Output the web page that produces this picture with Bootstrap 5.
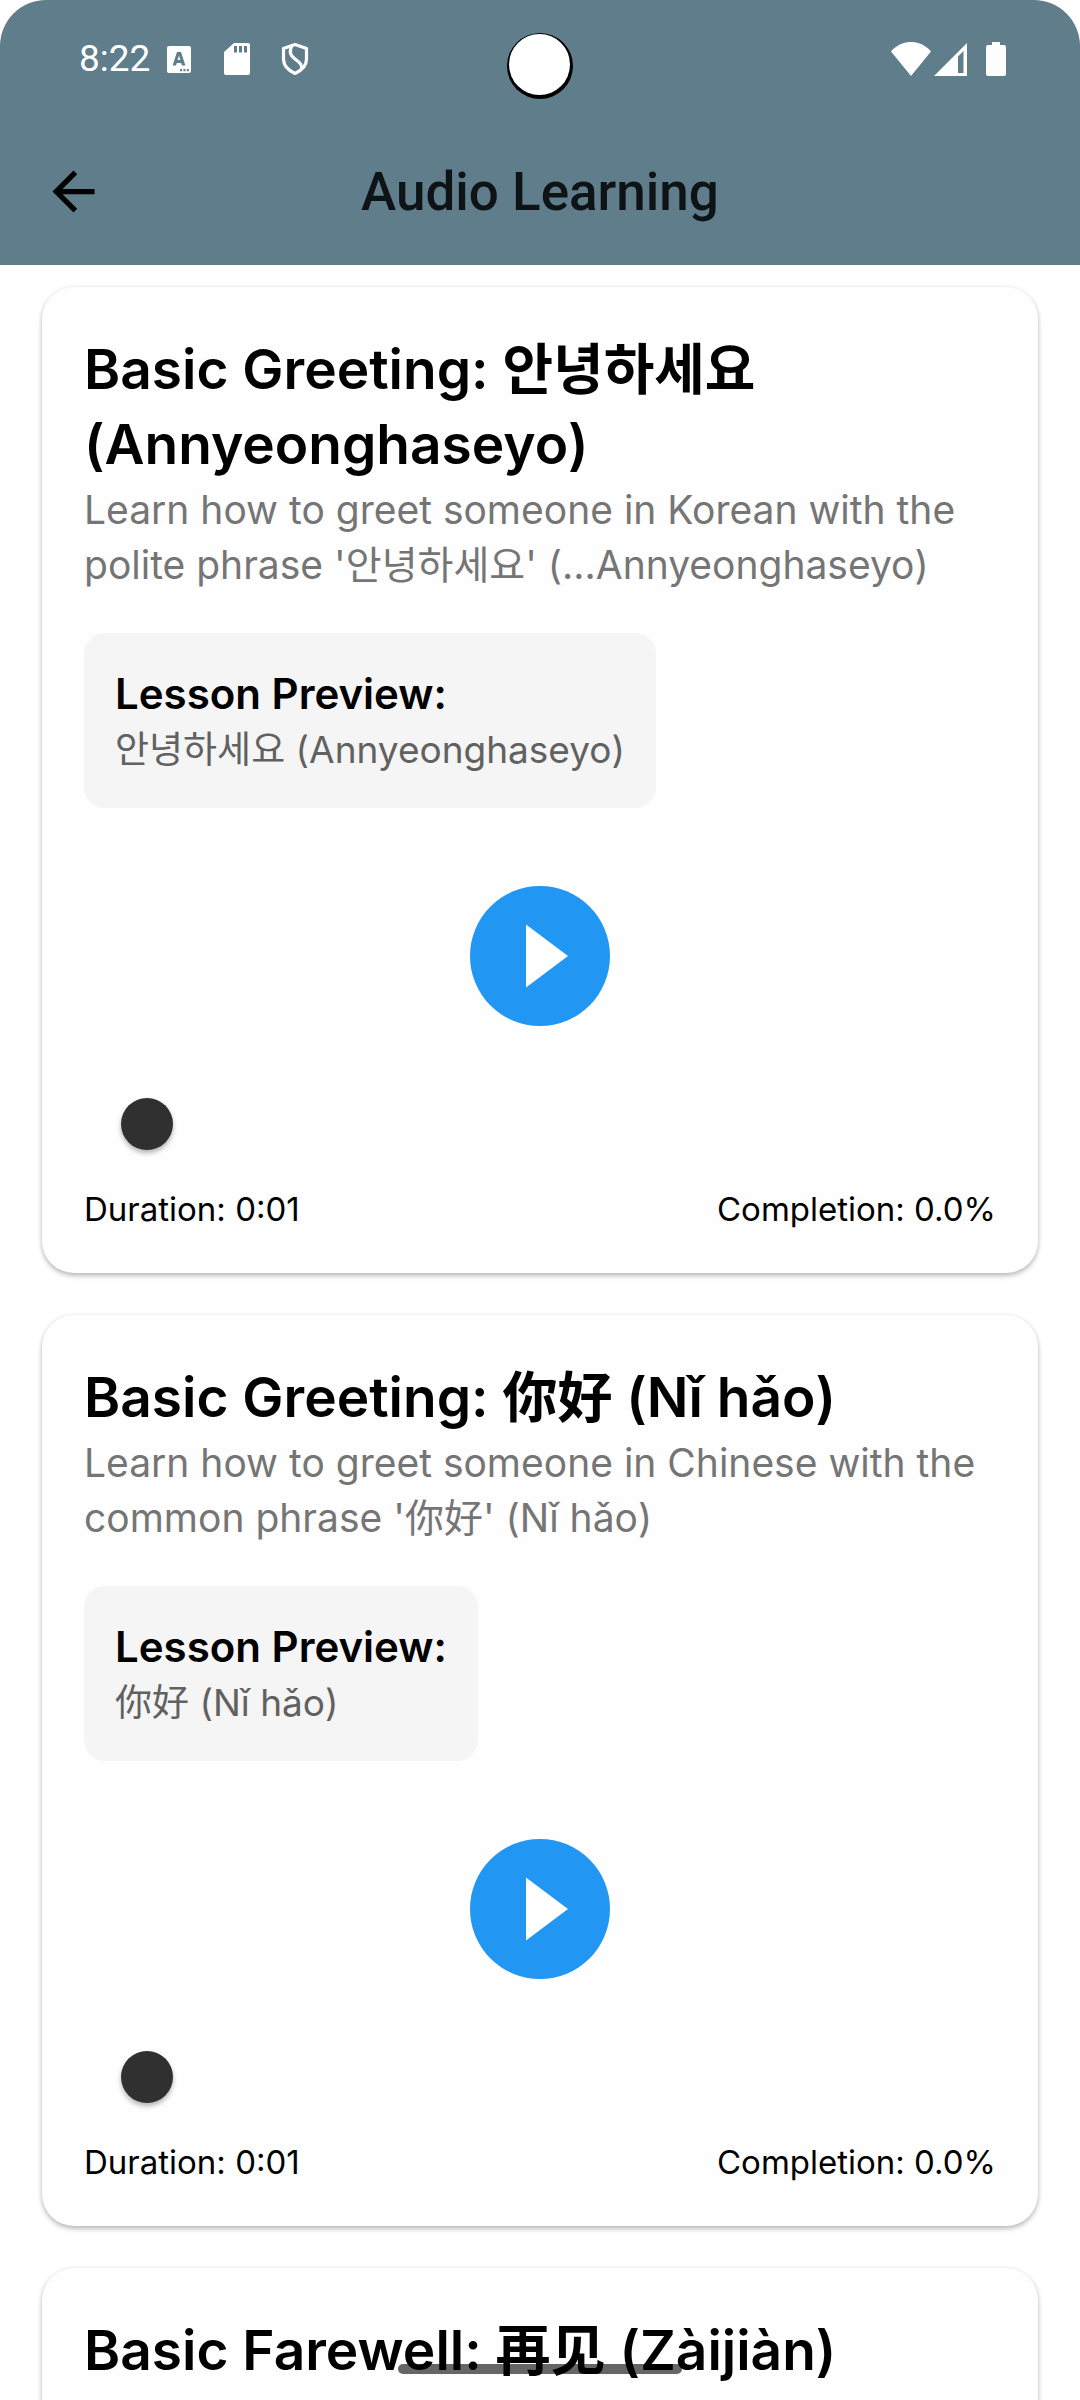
<!DOCTYPE html>
<html lang="en">
<head>
<meta charset="utf-8">
<meta name="viewport" content="width=device-width, initial-scale=1">
<title>Audio Learning</title>
<link href="https://cdn.jsdelivr.net/npm/bootstrap@5.3.0/dist/css/bootstrap.min.css" rel="stylesheet">
<style>
  body { background: #fff; color: #000; font-family: Inter, "Noto Sans CJK KR", sans-serif; }
  [lang="zh"] { font-family: Inter, "Noto Sans CJK SC", sans-serif; }
  .app-head { background: #607d8b; border-radius: 46px 46px 0 0; font-family: Roboto, sans-serif; }
  .status-bar { height: 118px; padding: 0 74px 0 79px; color: #fff; }
  .status-time { font-size: 37px; line-height: 44px; }
  .status-bar svg { display: block; fill: currentColor; }
  .icon-keys { margin-left: 17px; }
  .icon-card { margin-left: 33px; }
  .icon-shield { margin-left: 31px; }
  .icon-signal { margin-left: 3px; }
  .icon-battery { margin-left: 19px; }
  .camera { top: 33px; width: 66px; height: 66px; }
  .app-bar { height: 147px; padding: 0 42px; }
  .back-btn, .bar-end { width: 63px; height: 63px; }
  .app-title { font-size: 53px; line-height: 62px; font-weight: 500; color: #0e1316; }
  .lessons { padding: 22px 42px 0; gap: 42px; }
  .lesson { border: 0; border-radius: 32px; background: #fefefe; padding: 45px 42px 42px; flex-shrink: 0;
    box-shadow: 0 3px 5px rgba(0,0,0,.24), 0 0 5px rgba(0,0,0,.08); }
  .lesson-title { font-size: 55px; line-height: 75px; font-weight: 600; margin: 0; }
  .lesson-text { font-size: 39px; line-height: 55px; color: #757575; margin: 0 0 41px; }
  .preview { background: #f5f5f5; border-radius: 21px; padding: 31px; margin-bottom: 78px; }
  .preview-title { font-size: 42px; line-height: 59px; font-weight: 600; margin: 0; }
  .preview-text { font-size: 37px; line-height: 54px; color: #616161; margin: 0; }
  .play { width: 140px; height: 140px; background: #2196f3; }
  .seek { height: 127px; margin-top: 34px; padding: 0 37px; appearance: none; -webkit-appearance: none; background: transparent; }
  .seek::-webkit-slider-runnable-track { height: 52px; background: transparent; }
  .seek::-webkit-slider-thumb { -webkit-appearance: none; width: 52px; height: 52px; border-radius: 50%;
    background: #303030; box-shadow: 0 3px 5px rgba(0,0,0,.3); }
  .stats { font-size: 33px; line-height: 44px; }
  .home-bar { bottom: 26px; width: 284px; height: 10px; border-radius: 5px; background: rgba(0,0,0,.6); }
</style>
</head>
<body>
<div class="vh-100 d-flex flex-column overflow-hidden position-relative">
  <header class="app-head position-relative flex-shrink-0">
    <div class="status-bar d-flex align-items-center justify-content-between">
      <div class="d-flex align-items-center">
        <span class="status-time">8:22</span>
        <svg class="icon-keys" width="24" height="27" viewBox="0 0 24 27"><path fill-rule="evenodd" d="M2 0h20a2 2 0 0 1 2 2v23a2 2 0 0 1-2 2H2a2 2 0 0 1-2-2V2a2 2 0 0 1 2-2zM10 6 5.600 19.500h3.400l.8-2.500h4.400l.8 2.500h3.400L14 6zM12 9.500l1.300 4.500h-2.600zM13 23v2.200h2V23zm3.400 0v2.200h2V23zm3.400 0v2.200h2V23z"/></svg>
        <svg class="icon-card" width="26" height="32" viewBox="0 0 26 32"><path fill-rule="evenodd" d="M10 0h14a2 2 0 0 1 2 2v28a2 2 0 0 1-2 2H2a2 2 0 0 1-2-2V9zM10 3v6.500h3V3zm5 0v6.500h3V3zm5 0v6.500h3V3z"/></svg>
        <svg class="icon-shield" width="28" height="34" viewBox="0 0 28 34"><path d="M14 2.500 25.500 6.500v10.500c0 6.500-5 11.500-11.500 14.500C7.500 28.500 2.500 23.500 2.500 17V6.500zM10.500 4.500c-2.500 6-1 9 3.500 12.500s7.500 5.500 6.500 10.500" fill="none" stroke="currentColor" stroke-width="3.200" stroke-linejoin="round"/></svg>
      </div>
      <div class="d-flex align-items-center">
        <svg width="40" height="34" viewBox="0 0 40 34"><path d="M0 9.500C11-3.200 29-3.200 40 9.500L20 34z"/></svg>
        <svg class="icon-signal" width="33" height="33" viewBox="0 0 33 33"><path fill-rule="evenodd" d="M33 0v33H0zM29.500 8 24 13.500V30h5.500z"/></svg>
        <svg class="icon-battery" width="20" height="34" viewBox="0 0 20 34"><path d="M6 0h8v3h4a2 2 0 0 1 2 2v27a2 2 0 0 1-2 2H2a2 2 0 0 1-2-2V5a2 2 0 0 1 2-2h4z"/></svg>
      </div>
    </div>
    <svg class="camera position-absolute start-50 translate-middle-x" viewBox="0 0 66 66"><circle cx="33" cy="33" r="33"/><circle cx="32.500" cy="31.500" r="30.500" fill="#fff"/></svg>
    <div class="app-bar d-flex align-items-center justify-content-between">
      <button type="button" class="back-btn btn p-0 border-0 d-flex" aria-label="Back">
        <svg width="63" height="63" viewBox="0 0 24 24"><path d="M20 11H7.830l5.590-5.590L12 4l-8 8 8 8 1.410-1.410L7.830 13H20z"/></svg>
      </button>
      <h1 class="app-title m-0">Audio Learning</h1>
      <span class="bar-end"></span>
    </div>
  </header>

  <main class="lessons flex-grow-1 overflow-hidden d-flex flex-column">
    <article class="lesson card">
      <h2 class="lesson-title">Basic Greeting: 안녕하세요 (Annyeonghaseyo)</h2>
      <p class="lesson-text">Learn how to greet someone in Korean with the polite phrase '안녕하세요' (…Annyeonghaseyo)</p>
      <section class="preview align-self-start">
        <h3 class="preview-title">Lesson Preview:</h3>
        <p class="preview-text">안녕하세요 (Annyeonghaseyo)</p>
      </section>
      <button type="button" class="play btn border-0 p-0 rounded-circle align-self-center d-flex" aria-label="Play">
        <svg width="140" height="140" viewBox="0 0 140 140"><path d="M56 38.500v63l42-31.500z" fill="#fff"/></svg>
      </button>
      <input type="range" class="seek w-100" min="0" max="100" value="0" aria-label="Position">
      <div class="stats d-flex justify-content-between"><span>Duration: 0:01</span><span>Completion: 0.0%</span></div>
    </article>

    <article class="lesson card">
      <h2 class="lesson-title" lang="zh">Basic Greeting: 你好 (Nǐ hǎo)</h2>
      <p class="lesson-text" lang="zh">Learn how to greet someone in Chinese with the common phrase '你好' (Nǐ hǎo)</p>
      <section class="preview align-self-start">
        <h3 class="preview-title">Lesson Preview:</h3>
        <p class="preview-text" lang="zh">你好 (Nǐ hǎo)</p>
      </section>
      <button type="button" class="play btn border-0 p-0 rounded-circle align-self-center d-flex" aria-label="Play">
        <svg width="140" height="140" viewBox="0 0 140 140"><path d="M56 38.500v63l42-31.500z" fill="#fff"/></svg>
      </button>
      <input type="range" class="seek w-100" min="0" max="100" value="0" aria-label="Position">
      <div class="stats d-flex justify-content-between"><span>Duration: 0:01</span><span>Completion: 0.0%</span></div>
    </article>

    <article class="lesson card">
      <h2 class="lesson-title" lang="zh">Basic Farewell: 再见 (Zàijiàn)</h2>
    </article>
  </main>
  <div class="home-bar position-absolute start-50 translate-middle-x"></div>
</div>
<script src="https://cdn.jsdelivr.net/npm/bootstrap@5.3.0/dist/js/bootstrap.bundle.min.js"></script>
</body>
</html>
